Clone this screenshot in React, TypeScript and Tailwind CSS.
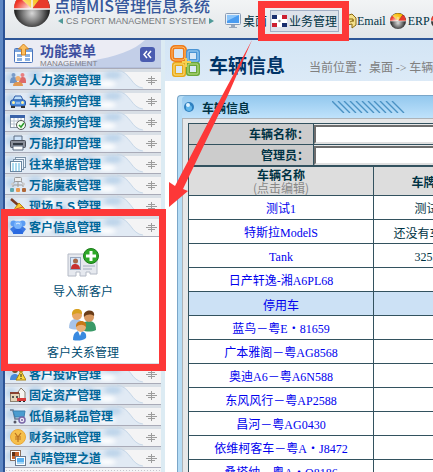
// Port management console: top bar, side menu and the vehicle list.

import type { ReactNode } from 'react';

const SANS = "font-['Noto_Sans_CJK_SC','Liberation_Sans',sans-serif]";

// Half-width runs are set in a serif face, the rest in the CJK face.
function Mixed({ text }: { text: string }) {
  return (
    <>
      {text.split(/([\x21-\x7e]+)/).map((part, i) =>
        i % 2 ? (
          <span key={i} className="font-['Liberation_Serif',serif]">
            {part}
          </span>
        ) : (
          part
        ),
      )}
    </>
  );
}

function Ball({ className, id, viewBox = '0 0 36 36' }: { className: string; id: string; viewBox?: string }) {
  return (
    <svg className={className} viewBox={viewBox} aria-hidden="true">
      <defs>
        <radialGradient id={`${id}-k`} cx="0.5" cy="0.62" r="0.5">
          <stop offset="0" stopColor="#d8d8d8" />
          <stop offset="0.5" stopColor="#7c7c7c" />
          <stop offset="1" stopColor="#161616" />
        </radialGradient>
        <radialGradient id={`${id}-r`} cx="1" cy="1" r="1">
          <stop offset="0" stopColor="#fff" />
          <stop offset="1" stopColor="#f03424" />
        </radialGradient>
        <radialGradient id={`${id}-y`} cx="0" cy="1" r="1.1">
          <stop offset="0" stopColor="#fff3b0" />
          <stop offset="1" stopColor="#f8b800" />
        </radialGradient>
      </defs>
      <circle cx="18" cy="18" r="18" fill={`url(#${id}-k)`} />
      <path d="M0 18a18 18 0 0 1 6-13L18 18z" fill="#f2f2f2" />
      <path d="M5 6A18 18 0 0 1 29 4L18 18z" fill={`url(#${id}-y)`} />
      <path d="M29 4a18 18 0 0 1 7 14H18z" fill="#e83a2a" />
      <path d="M0 18C0 13 2 8 5 6l13 12z" fill={`url(#${id}-r)`} />
      <path d="M0 18h36M18 18V9" stroke="#f4f4f4" strokeWidth="1.500" />
    </svg>
  );
}

function Icon({ children }: { children: ReactNode }) {
  return (
    <svg className="relative size-4 shrink-0" viewBox="0 0 16 16" aria-hidden="true">
      {children}
    </svg>
  );
}

const ICONS: Record<string, ReactNode> = {
  staff: (
    <>
      <circle cx="3.500" cy="3" r="2" fill="#7a9cc8" />
      <path d="M0 11c0-4 1-6 4-6s3 3 3 6z" fill="#6f94c4" />
      <circle cx="12.500" cy="3" r="2" fill="#e98080" />
      <path d="M9 11c0-4 1-6 4-6s3 3 3 6z" fill="#de6a6a" />
      <circle cx="8" cy="6.500" r="2.500" fill="#f0b070" />
      <path d="M3 14c0-3 2-4 4-4h2c2 0 4 1 4 4z" fill="#e09850" />
    </>
  ),
  car: (
    <>
      <path d="M3 7l2-4h6l2 4z" fill="#bfe0fa" stroke="#2a5aa8" />
      <rect x="0.500" y="7" width="15" height="6" rx="2" fill="#4a8ee0" stroke="#2a5aa8" />
      <circle cx="3.500" cy="9.500" r="1.500" fill="#fff2a0" />
      <circle cx="12.500" cy="9.500" r="1.500" fill="#fff2a0" />
      <path d="M6 10h4" stroke="#cfe2fa" />
      <path d="M1 13h4v2H1zM11 13h4v2h-4z" fill="#333" />
    </>
  ),
  calendar: (
    <>
      <rect x="0.500" y="1.500" width="14" height="12" fill="#fff" stroke="#8a98a8" />
      <path d="M0 1h15v3H0z" fill="#3a62a8" />
      <path d="M1 7h13M1 10h13M4 4v9M8 4v9M11 4v9" stroke="#b8c4d0" />
      <circle cx="11" cy="11" r="4.500" fill="#f2fff0" stroke="#555" />
      <path d="M9 11l2 2 3-4" fill="none" stroke="#2a9a2a" strokeWidth="1.500" />
    </>
  ),
  printer: (
    <>
      <path d="M4 1h8v5H4z" fill="#cfe4fa" stroke="#5a6a80" />
      <rect x="0.500" y="5.500" width="15" height="7" rx="1" fill="#8a8f9a" stroke="#4a4f5a" />
      <path d="M3 8h10v2H3z" fill="#333a44" />
      <path d="M3 11h10v4H3z" fill="#fff" stroke="#5a6a80" />
    </>
  ),
  docs: (
    <>
      <rect x="5.500" y="1.500" width="10" height="10" fill="#eef6ff" stroke="#7a92a8" />
      <rect x="3.500" y="3.500" width="10" height="10" fill="#eef6ff" stroke="#7a92a8" />
      <rect x="0.500" y="5.500" width="11" height="10" fill="#fff" stroke="#6a86a0" />
      <path d="M2 8h8M2 10h8M2 12h8M2 14h8" stroke="#58b4e0" strokeDasharray="2 1" />
    </>
  ),
  chart: (
    <>
      <rect x="4.500" y="0.500" width="7" height="4" rx="1" fill="#eee" stroke="#999" />
      <path d="M8 5v5M3 10V8h10v2M3 7l2-3M13 7l-2-3" fill="none" stroke="#999" />
      <circle cx="2.500" cy="7" r="1.500" fill="#ccc" />
      <circle cx="13.500" cy="7" r="1.500" fill="#ccc" />
      <rect x="0" y="11" width="4" height="4" rx="1" fill="#5fa8b0" />
      <rect x="6" y="11" width="4" height="4" rx="1" fill="#e89850" />
      <rect x="12" y="11" width="4" height="4" rx="1" fill="#b06838" />
    </>
  ),
  broom: (
    <>
      <path d="M1 1l7 6" stroke="#7a3a20" strokeWidth="2.500" />
      <path d="M9 5l5 5 2 5-7-1-5 1 1-5z" fill="#f6c832" stroke="#b88a10" />
      <path d="M6 11l7-2" stroke="#d04a3a" />
    </>
  ),
  client: (
    <>
      <circle cx="3.500" cy="4.500" r="3" fill="#5a9cf4" />
      <circle cx="12.500" cy="4.500" r="3" fill="#5a9cf4" />
      <path d="M0 10l4-3h8l4 3-3 4H3z" fill="#3a78e4" />
      <circle cx="8" cy="6" r="4" fill="#7ab4fc" />
      <path d="M3 15c0-4 2-5 5-5s5 1 5 5z" fill="#2a6ae0" />
      <path d="M6 5l2-1 2 1" stroke="#e2f0ff" fill="none" />
    </>
  ),
  complaint: (
    <>
      <circle cx="5" cy="4" r="3" fill="#7a4a20" />
      <path d="M0 14c0-4 2-6 5-6s4 2 4 6z" fill="#4a8ad8" />
      <circle cx="11" cy="4" r="2.500" fill="#c88840" />
      <path d="M11 5l5 9H6z" fill="#fcd840" stroke="#a88010" />
      <path d="M11 8v3M11 12v1" stroke="#222" />
    </>
  ),
  assets: (
    <>
      <path d="M8 13V5l3-4 4 4v8z" fill="#f6f4f0" stroke="#8a8070" />
      <rect x="0.500" y="6.500" width="9" height="8" fill="#e4d4b8" stroke="#8a8070" />
      <path d="M0 5h9v2H0z" fill="#884030" />
      <path d="M2 9h2v2H2zM6 9h2v2H6z" fill="#555" />
      <path d="M7 11h9v3H7z" fill="#d83a3a" />
      <path d="M9 14h2v1H9zM13 14h2v1h-2z" fill="#222" />
    </>
  ),
  cart: (
    <>
      <path d="M0 2h3l2 9h9" fill="none" stroke="#6a7a90" strokeWidth="1.500" />
      <path d="M3 3h12l-1 6H5z" fill="#4a9cd0" stroke="#3a80b0" />
      <circle cx="5" cy="14" r="1.500" fill="#556" />
      <circle cx="12" cy="12" r="3" fill="#f0eaf8" stroke="#7a68a8" strokeWidth="1.500" />
      <circle cx="12" cy="12" r="1" fill="#7a68a8" />
    </>
  ),
  money: (
    <>
      <circle cx="8" cy="8" r="7.500" fill="#f6c04c" stroke="#eaa838" />
      <path d="M5 4l3 4 3-4M8 8v5M5 8h6M5 10h6" fill="none" stroke="#b87020" strokeWidth="1.200" />
    </>
  ),
  photos: (
    <>
      <rect x="0.500" y="0.500" width="10" height="10" fill="#fff" stroke="#8a7060" />
      <path d="M2 2h7v7H2z" fill="#c8642a" />
      <path d="M2 2h3v4H2z" fill="#5a3018" />
      <rect x="5.500" y="6.500" width="10" height="9" fill="#fff" stroke="#6a7a90" />
      <path d="M7 8h7v6H7z" fill="#58b0f0" />
      <path d="M7 12h7v2H7z" fill="#a8d8f8" />
    </>
  ),
};

const MENU_TOP = [
  { icon: 'staff', label: '人力资源管理' },
  { icon: 'car', label: '车辆预约管理' },
  { icon: 'calendar', label: '资源预约管理' },
  { icon: 'printer', label: '万能打印管理' },
  { icon: 'docs', label: '往来单据管理' },
  { icon: 'chart', label: '万能魔表管理' },
  { icon: 'broom', label: '现场５Ｓ管理' },
  { icon: 'client', label: '客户信息管理' },
];

const MENU_BOTTOM = [
  { icon: 'complaint', label: '客户投诉管理' },
  { icon: 'assets', label: '固定资产管理' },
  { icon: 'cart', label: '低值易耗品管理' },
  { icon: 'money', label: '财务记账管理' },
  { icon: 'photos', label: '点晴管理之道' },
];

const VEHICLES = [
  { name: '测试1', plate: '测试1' },
  { name: '特斯拉ModelS', plate: '还没有车牌号' },
  { name: 'Tank', plate: '32555' },
  { name: '日产轩逸-湘A6PL68', plate: '' },
  { name: '停用车', plate: '', stopped: true },
  { name: '蓝鸟－粤E・81659', plate: '' },
  { name: '广本雅阁－粤AG8568', plate: '' },
  { name: '奥迪A6－粤A6N588', plate: '' },
  { name: '东风风行－粤AP2588', plate: '' },
  { name: '昌河－粤AG0430', plate: '' },
  { name: '依维柯客车－粤A・J8472', plate: '' },
  { name: '桑塔纳－粤A・Q8186', plate: '' },
];

function MenuRow({ icon, label }: { icon: string; label: string }) {
  return (
    <button
      type="button"
      className="relative flex h-[21px] w-full items-center gap-[3px] overflow-hidden border-b border-[#a9abb8] bg-[#f4f4f5] pt-0.5 pr-1 pl-[5px] text-left"
    >
      <svg
        className="absolute inset-0 size-full"
        viewBox="0 0 156 20"
        preserveAspectRatio="none"
        aria-hidden="true"
      >
        <path d="M0 0h112c14 2 14 18 28 20H0z" fill="#e1eaf4" />
        <path d="M0 0h156v3H0z" fill="#d9dfe6" />
        <g fill="#bdd4ea" className="blur-[2px]">
          <ellipse cx="6" cy="9" rx="5" ry="5" />
          <ellipse cx="30" cy="6" rx="7" ry="4" />
          <ellipse cx="55" cy="14" rx="9" ry="4" />
          <ellipse cx="82" cy="7" rx="8" ry="4" />
          <ellipse cx="108" cy="6" rx="9" ry="4" />
        </g>
        <g fill="#fff" className="blur-[2px]">
          <ellipse cx="44" cy="9" rx="5" ry="6" />
          <ellipse cx="70" cy="13" rx="6" ry="4" />
          <ellipse cx="102" cy="15" rx="9" ry="3" />
        </g>
        <path d="M112 1c14 2 14 17 26 18" fill="none" stroke="#c8d8e8" />
      </svg>
      <Icon>{ICONS[icon]}</Icon>
      <span className="relative flex-1 text-xs leading-[18px] font-bold whitespace-nowrap text-[#006699]">
        {label}
      </span>
      <svg className="relative h-[9px] w-[11px]" viewBox="0 0 11 9" shapeRendering="crispEdges" aria-hidden="true">
        <path d="M0 4h11v1H0zM2 2h7v1H2zM2 6h7v1H2zM5 0h1v9H5z" fill="#9c9c9c" />
      </svg>
    </button>
  );
}

function Header() {
  return (
    <header className="flex h-10 shrink-0 overflow-hidden border-b-2 border-[#2d5596] bg-linear-to-b from-[#f2f4f5] to-[#e2e6e9]">
      <div className="flex w-[215px] shrink-0 gap-1 pl-[9px]">
        <Ball id="logo" className="h-[27px] w-9 shrink-0" viewBox="0 9 36 27" />
        <div className="whitespace-nowrap">
          <div className="text-base leading-[10px] font-medium text-[#35579b]">点晴MIS管理信息系统</div>
          <div className="flex items-center gap-[3px] pl-1 font-['Liberation_Sans',sans-serif] text-[9px] leading-[22px] text-[#75797c]">
            <svg className="h-[6px] w-[5px]" viewBox="0 0 5 6" aria-hidden="true">
              <path d="M5 0v6L0 3z" fill="#4f9a98" />
            </svg>
            CS PORT MANAGMENT SYSTEM
            <svg className="h-[6px] w-[5px]" viewBox="0 0 5 6" aria-hidden="true">
              <path d="M0 0v6l5-3z" fill="#4f9a98" />
            </svg>
          </div>
        </div>
      </div>
      <nav className="flex shrink-0 items-center pt-1 pl-[5px] text-xs whitespace-nowrap text-[#003344]">
        <a href="#desk" className="flex items-center gap-0.5">
          <svg className="size-4" viewBox="0 0 16 16" aria-hidden="true">
            <rect x="0.500" y="0.500" width="15" height="11" rx="1" fill="#e8f0f8" stroke="#8a9cb4" />
            <path d="M2 2h12v8H2z" fill="#4a9cf0" />
            <path d="M2 2h12L2 8z" fill="#8cc6fa" />
            <path d="M6 12h4v2h2v1H4v-1h2z" fill="#98a8bc" />
          </svg>
          桌面
        </a>
        <button
          type="button"
          className="ml-[3px] flex h-[22px] items-center gap-0.5 border border-[#a3afc4] bg-[#dde2ea] px-px"
        >
          <svg className="h-3 w-[15px]" viewBox="0 0 15 12" aria-hidden="true">
            <path d="M0 0h15v12H0z" fill="#fff" />
            <path d="M0 0h5v4H0zM10 8h5v4h-5z" fill="#1a2f6e" />
            <path d="M10 0h5v4h-5zM0 8h5v4H0z" fill="#cc2030" />
            <circle cx="7.500" cy="6" r="1.200" fill="#888" />
          </svg>
          业务管理
        </button>
        <a href="#email" className="ml-[7px] flex items-center">
          <svg className="h-4 w-[11px]" viewBox="0 0 11 16" aria-hidden="true">
            <path d="M0 3l6-2 4 4v7l-4 3v-4L1 12z" fill="#f4e08a" stroke="#8a6a10" />
            <path d="M1 6h6v3M4 9l4-2" stroke="#8a6a10" fill="none" />
          </svg>
          <Mixed text="Email" />
        </a>
        <a href="#erp" className="ml-1 flex items-center gap-0.5">
          <Ball id="erp" className="size-4" />
          <Mixed text="ERP" />
        </a>
        <a href="#more" className="ml-px flex items-center" aria-label="ERP">
          <Ball id="more" className="size-4" />
        </a>
      </nav>
    </header>
  );
}

function Sidebar() {
  return (
    <aside className="w-40 shrink-0 border-r-4 border-[#dcebf3] bg-[radial-gradient(#c4c4cc_1px,#f4f4f6_1px)] bg-size-[3px_3px]">
      <div className="relative flex h-[29px] items-center border-b border-[#a9abb8] bg-[#ebecf4] pr-1.5 pl-[9px]">
        <svg
          className="absolute inset-0 size-full"
          viewBox="0 0 156 28"
          preserveAspectRatio="none"
          aria-hidden="true"
        >
          <path d="M156 0v28H0c60-1 120-8 140-28z" fill="#c3cfe8" />
          <path d="M0 27h156v1H0z" fill="#b4c0dc" />
        </svg>
        <svg className="relative size-5 shrink-0" viewBox="0 0 20 20" aria-hidden="true">
          <rect x="0.500" y="4.500" width="18" height="14" rx="1" fill="#fff" stroke="#4a74bc" />
          <path d="M1 5h17v3H1z" fill="#7aa4dc" />
          <path d="M3 10h5v3H3zM11 10h5v3h-5zM3 14h5v3H3zM11 14h5v3h-5z" fill="#8ab0e0" />
          <path d="M9.500 0l5 5h-3v6h-4V5h-3z" fill="#fcc060" stroke="#d08020" />
        </svg>
        <div className="relative ml-1.5 flex-1 whitespace-nowrap">
          <div className="text-[14px] leading-5 font-bold text-[#3d4f9f]">功能菜单</div>
          <div className="font-['Liberation_Sans',sans-serif] text-[8px] leading-[8px] text-[#808088]">MANAGEMENT</div>
        </div>
        <button type="button" aria-label="收起菜单" className="relative rounded-[3px] bg-[#4a5cb0]">
          <svg className="size-[15px]" viewBox="0 0 15 15" aria-hidden="true">
            <path d="M7 4L4 7.500 7 11M11 4L8 7.500 11 11" fill="none" stroke="#fff" strokeWidth="1.500" />
          </svg>
        </button>
      </div>
      {MENU_TOP.map((m) => (
        <MenuRow key={m.label} {...m} />
      ))}
      <div className="flex h-[126px] flex-col items-center bg-white pt-[11px] text-xs text-[#004b70]">
        <a href="#import" className="flex flex-col items-center">
          <svg className="h-[30px] w-8" viewBox="0 0 32 30" aria-hidden="true">
            <path d="M1 6h29v20h-7v-2h-4v4h-6v-4H9v4H1z" fill="#e6e9ef" stroke="#b4bac6" />
            <rect x="3.500" y="9.500" width="10" height="12" fill="#d8e8fa" stroke="#98a8c0" />
            <circle cx="8.500" cy="13" r="2.500" fill="#a86848" />
            <path d="M4 21c0-4 2-5 4-5s5 1 5 5z" fill="#c83030" />
            <path d="M16 18h12M16 21h9" stroke="#a0acc0" />
            <circle cx="24" cy="8" r="7.500" fill="#2ea828" stroke="#1a7a1a" />
            <path d="M24 3v10M19 8h10" stroke="#fff" strokeWidth="3" />
          </svg>
          <span className="mt-1 leading-[18px]">导入新客户</span>
        </a>
        <a href="#crm" className="mt-[9px] flex flex-col items-center">
          <svg className="h-8 w-[30px]" viewBox="0 0 30 32" aria-hidden="true">
            <path d="M1 19c0-7 3-9 7-9s7 2 7 9c-4 2-10 2-14 0z" fill="#a8c4e8" />
            <circle cx="9" cy="6" r="5" fill="#e8a868" />
            <path d="M4 6c-1-8 11-8 10-1-4-1-6-1-10 1z" fill="#d8a020" />
            <path d="M14 21c0-7 3-9 7-9s7 2 7 9c-4 2-10 2-14 0z" fill="#3a9a68" />
            <circle cx="21" cy="8" r="5" fill="#d89860" />
            <path d="M16 8c-2-8 12-9 10-1-3-2-7-2-10 1z" fill="#6a3c18" />
            <path d="M5 31c0-7 3-9 7-9s7 2 6 7c-3 3-10 3-13 2z" fill="#3a8ae0" />
            <path d="M10 22l2 5 2-5z" fill="#fff" />
            <circle cx="13" cy="18" r="5" fill="#eab078" />
            <path d="M8 18c-1-8 12-8 10 0-3-3-6-3-10 0z" fill="#c87818" />
          </svg>
          <span className="mt-0.5 leading-[18px]">客户关系管理</span>
        </a>
      </div>
      {MENU_BOTTOM.map((m) => (
        <MenuRow key={m.label} {...m} />
      ))}
    </aside>
  );
}

function OfficeIcon() {
  return (
    <svg className="h-8 w-[30px] shrink-0" viewBox="0 0 30 32" fill="none" aria-hidden="true">
      <rect x="2" y="2" width="13" height="13" rx="3" stroke="#ee7c1c" strokeWidth="4" />
      <rect x="2" y="2" width="13" height="13" rx="3" stroke="#fdbb6a" strokeWidth="1" />
      <rect x="18" y="6" width="10" height="10" rx="1" stroke="#4a94d4" strokeWidth="4" />
      <rect x="18" y="6" width="10" height="10" rx="1" stroke="#a8d6f6" strokeWidth="1" />
      <rect x="4" y="19" width="10" height="11" rx="1" stroke="#e8a818" strokeWidth="4" />
      <rect x="4" y="19" width="10" height="11" rx="1" stroke="#fce48a" strokeWidth="1" />
      <rect x="18" y="19" width="10" height="10" rx="1" stroke="#6aa838" strokeWidth="4" />
      <rect x="18" y="19" width="10" height="10" rx="1" stroke="#c0e08a" strokeWidth="1" />
      <path d="M12 17h9M16 13v9" stroke="#f6d050" strokeWidth="2" />
    </svg>
  );
}

function Field({ id, label }: { id: string; label: string }) {
  return (
    <tr>
      <th className="h-[21px] w-[125px] border border-[#33525f] bg-[#cccccc] pr-1 text-right leading-[18px] font-bold">
        <label htmlFor={id}>{label}</label>
      </th>
      <td className="border border-[#33525f] bg-[#e8e8e8]">
        <input
          id={id}
          type="text"
          className="block h-[19px] w-full border-2 border-t-[#6d6d6d] border-r-[#e0e0e0] border-b-[#e0e0e0] border-l-[#6d6d6d] bg-white px-1"
        />
      </td>
    </tr>
  );
}

function VehiclePanel() {
  return (
    <section className="mt-[14px] ml-3 min-w-[640px] rounded-t-[4px] border-t border-l border-[#7aa6c8] bg-[#b5dcf5] pl-1 text-xs text-[#003344]">
      <div className="flex h-[22px] items-center rounded-t-[4px] bg-linear-to-b from-[#93c8ee] to-[#bfe2fb] pl-0.5">
        <svg className="size-[10px]" viewBox="0 0 10 10" aria-hidden="true">
          <circle cx="5" cy="5" r="5" fill="#2f80c0" />
          <circle cx="5" cy="6" r="3" fill="#62b8ec" />
          <circle cx="4" cy="3" r="2" fill="#dff3ff" />
        </svg>
        <h2 className="ml-2 w-[130px] pt-0.5 leading-5 font-bold">车辆信息</h2>
        <svg className="h-3 w-[74px]" viewBox="0 0 74 12" aria-hidden="true">
          <path
            d="M0 0l12 12M6 0l12 12M12 0l12 12M18 0l12 12M24 0l12 12M30 0l12 12M36 0l12 12M42 0l12 12M48 0l12 12M54 0l12 12M60 0l12 12"
            stroke="#4a92c4"
            strokeWidth="1.400"
          />
        </svg>
      </div>
      <div className="border-t border-l border-[#adb3b8] bg-[#e6e7e8] pt-1 pl-[5px]">
        <table className="w-full table-fixed border-collapse">
          <tbody>
            <Field id="vehicle" label="车辆名称：" />
            <Field id="manager" label="管理员：" />
          </tbody>
        </table>
        <table className="w-full table-fixed border-collapse text-center">
          <thead>
            <tr className="h-[29px] bg-[#dddddd] leading-[13px]">
              <th className="w-[185px] border border-[#33525f] p-0">
                车辆名称
                <div className="font-normal text-[#888888]">(点击编辑)</div>
              </th>
              <th className="w-28 border border-[#33525f] p-0">车牌号</th>
              <th className="border border-[#33525f] p-0">管理员</th>
            </tr>
          </thead>
          <tbody>
            {VEHICLES.map((v) => (
              <tr key={v.name} className={`h-6 leading-[18px] ${v.stopped ? 'bg-[#cce1f5]' : 'bg-white'}`}>
                <td className="border border-[#33525f] p-0 pt-0.5">
                  <a href="#vehicle" className="text-[#0000ee]">
                    <Mixed text={v.name} />
                  </a>
                </td>
                <td className="border border-[#33525f] p-0 pt-0.5">
                  <Mixed text={v.plate} />
                </td>
                <td className="border border-[#33525f] p-0" />
              </tr>
            ))}
          </tbody>
        </table>
      </div>
    </section>
  );
}

// Red marks that lead from the top tab to the open menu group.
function Marks() {
  return (
    <svg
      className="pointer-events-none absolute top-0 left-0 h-[380px] w-[360px]"
      viewBox="0 0 360 380"
      aria-hidden="true"
    >
      <g fill="none" stroke="#fd3838" strokeWidth="7">
        <path d="M261.500 4.500h84v33h-84z" />
        <path d="M4.500 212.500h158v155h-158z" />
      </g>
      <path d="M252 40l-29 54-48 92-6-4v25l19-16-5-2 45-94z" fill="#fd3838" />
    </svg>
  );
}

export default function App() {
  return (
    <div className={`relative flex h-screen overflow-hidden bg-white ${SANS}`}>
      <div className="w-[5px] shrink-0 border-r-2 border-[#2c5294] bg-[#5f88c4]" />
      <div className="flex min-w-0 flex-1 flex-col">
        <Header />
        <div className="flex min-h-0 flex-1">
          <Sidebar />
          <main className="min-w-0 flex-1 overflow-hidden">
            <div className="flex h-[41px] items-center bg-linear-to-b from-[#d3e5f5] to-[#dceaf7] pl-[5px] whitespace-nowrap">
              <OfficeIcon />
              <h1 className="ml-[9px] pt-2 text-[19px] leading-6 font-bold text-[#003366]">车辆信息</h1>
              <div className="ml-6 pt-3.5 text-xs leading-4 text-[#808080]">
                当前位置：桌面 <Mixed text="->" /> 车辆信息
              </div>
            </div>
            <VehiclePanel />
          </main>
        </div>
      </div>
      <Marks />
    </div>
  );
}
